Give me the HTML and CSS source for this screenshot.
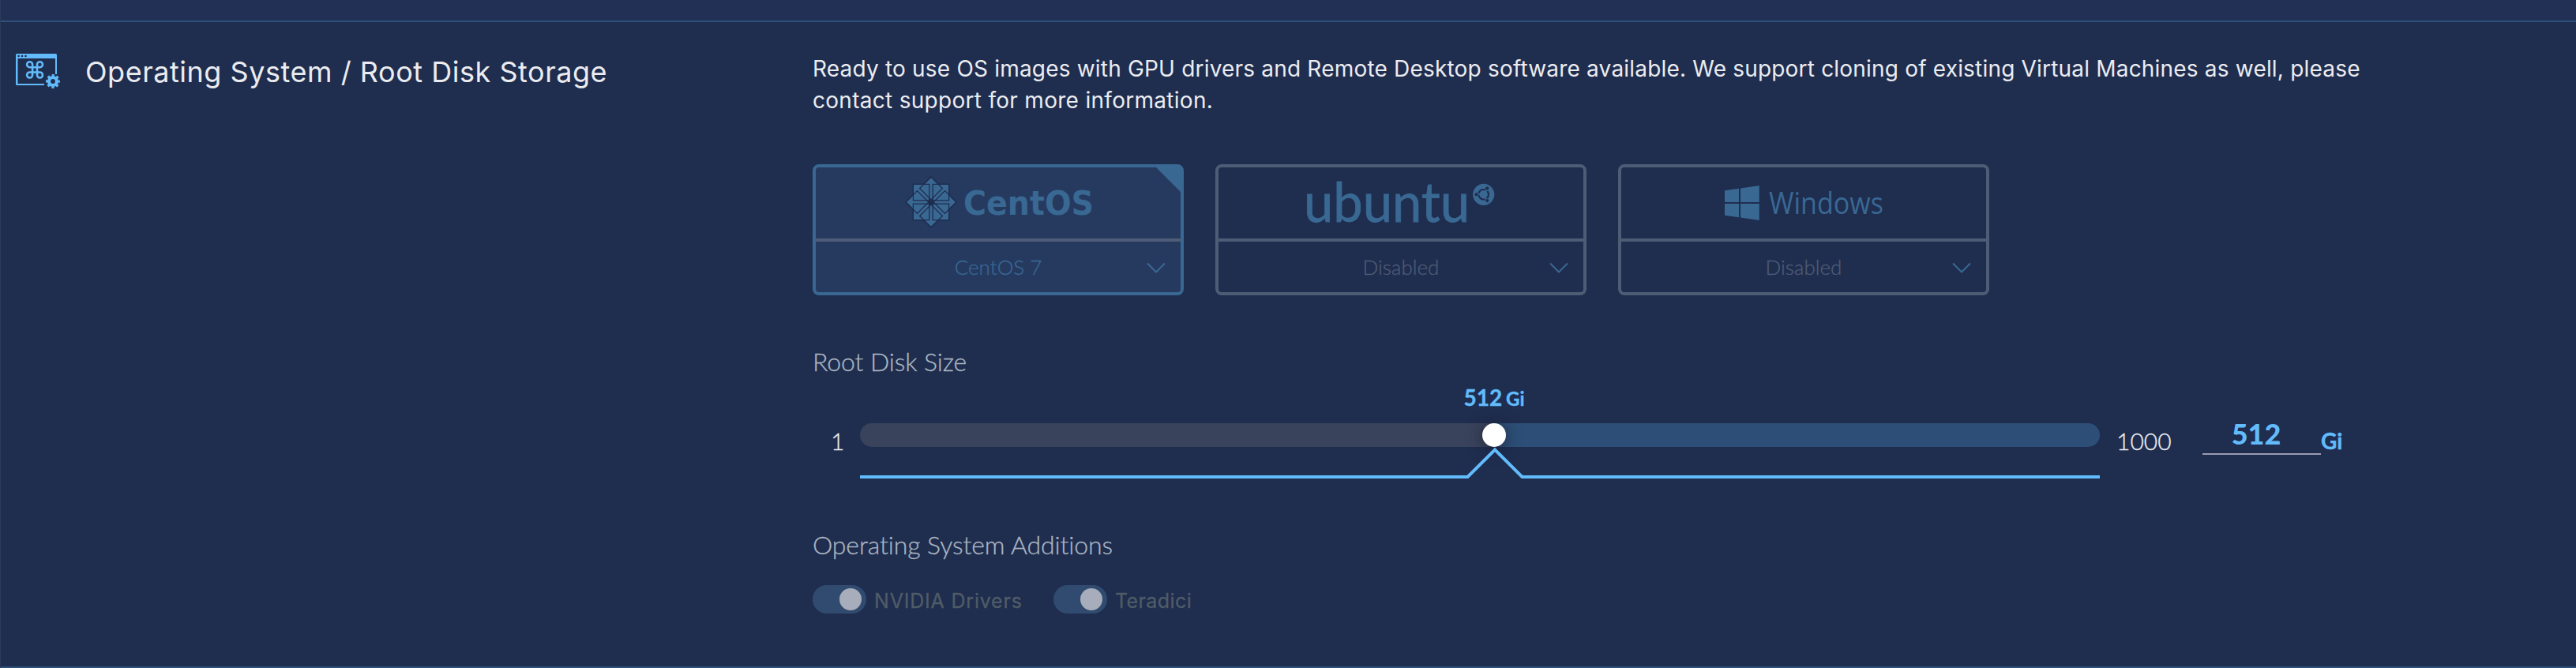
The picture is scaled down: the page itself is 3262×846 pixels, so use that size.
FILE: index.html
```html
<!DOCTYPE html>
<html lang="en">
<head>
<meta charset="utf-8">
<title>Operating System / Root Disk Storage</title>
<link rel="stylesheet" href="styles.css">
</head>
<body>
<div class="page">
  <div class="strip"></div>
  <section class="section">
    <header class="section-head">
      <svg class="head-icon" viewBox="0 0 56 44">
        <path d="M1.5 0H50.5Q52 0 52 1.5V26H50V6H2.500V38H36V40H1.500Q0 40 0 38.500V1.500Q0 0 1.500 0Z" fill="#62bbfb"/>
        <g fill="#1f2d4f"><circle cx="3.600" cy="3" r="1.300"/><circle cx="8" cy="3" r="1.300"/><circle cx="12.500" cy="3" r="1.300"/></g>
        <path d="M21.300 17.700V14.500A3.500 3.500 0 1 0 17.800 17.700H30.700A3.500 3.500 0 1 0 27.200 14.500V27.500A3.500 3.500 0 1 0 30.700 24H17.800A3.500 3.500 0 1 0 21.300 27.500Z" transform="translate(-.2 -.5)" fill="none" stroke="#62bbfb" stroke-width="2.600"/>
        <g fill="none" stroke="#62bbfb"><circle cx="47" cy="35" r="5" stroke-width="4.200"/><circle cx="47" cy="35" r="7.700" stroke-width="2.600" stroke-dasharray="3.200 2.847" stroke-dashoffset="1.600"/></g>
      </svg>
      <h2 class="title">Operating System / Root Disk Storage</h2>
    </header>
    <div class="content">
      <p class="desc"><span class="line1">Ready to use OS images with GPU drivers and Remote Desktop software available. We support cloning of existing Virtual Machines as well, please</span><br><span class="line2">contact support for more information.</span></p>

      <div class="cards">
        <div class="card selected">
          <svg class="corner" viewBox="0 0 31 31"><path d="M0 0H31V31Z" fill="#396893"/></svg>
          <svg class="logo" viewBox="0 0 462 90">
            <g transform="translate(146 44)" stroke="#1f2d4f" stroke-width="1.300" fill="#396893">
              <rect x="-22.600" y="-22.600" width="45.200" height="45.200"/>
              <rect x="-22.600" y="-22.600" width="45.200" height="45.200" transform="rotate(45)"/>
              <rect x="-22" y="-22" width="44" height="44" stroke="none"/>
              <g id="quads" fill="none">
                <path d="M-22.600-22.600H-2.200V-2.200H-22.600ZM22.600-22.600H2.200V-2.200H22.600ZM-22.600 22.600H-2.200V2.200H-22.600ZM22.600 22.600H2.200V2.200H22.600Z"/>
              </g>
              <use href="#quads" transform="rotate(45)"/>
              <circle r="4" fill="#1f2d4f" stroke="none"/>
            </g>
            <text class="centos" x="187" y="60" textLength="165" lengthAdjust="spacingAndGlyphs">CentOS</text>
          </svg>
          <div class="choice"><span class="choice-text">CentOS 7</span><svg class="chev" viewBox="0 0 24 14"><path d="M1 1.500L12 12.500 23 1.500"/></svg></div>
        </div>
        <div class="card">
          <svg class="logo" viewBox="0 0 462 90">
            <text class="ubuntu" x="108" y="69" textLength="210" lengthAdjust="spacingAndGlyphs">ubuntu</text>
            <circle cx="335.700" cy="34.300" r="13.600" fill="#396893"/>
            <g transform="translate(335.700 34.300)" fill="none" stroke="#1f2d4f">
              <circle r="6.300" stroke-width="2.200" stroke-dasharray="11.195 2" stroke-dashoffset="-7.600"/>
              <g fill="#1f2d4f" stroke="#396893" stroke-width=".8"><circle cx="-9" r="2.500"/><circle cx="4.500" cy="-7.800" r="2.500"/><circle cx="4.500" cy="7.800" r="2.500"/></g>
            </g>
          </svg>
          <div class="choice"><span class="choice-text">Disabled</span><svg class="chev" viewBox="0 0 24 14"><path d="M1 1.500L12 12.500 23 1.500"/></svg></div>
        </div>
        <div class="card">
          <svg class="logo" viewBox="0 0 462 90">
            <path d="M131 29.300L149 26.800V44H131ZM151 26.500L174.700 23V44H151ZM131 46H149V63.300L131 60.800ZM151 46H174.700V67L151 63.600Z" fill="#396893"/>
            <text class="windows" x="187" y="58.500" textLength="145" lengthAdjust="spacingAndGlyphs">Windows</text>
          </svg>
          <div class="choice"><span class="choice-text">Disabled</span><svg class="chev" viewBox="0 0 24 14"><path d="M1 1.500L12 12.500 23 1.500"/></svg></div>
        </div>
      </div>

      <h3 class="label">Root Disk Size</h3>
      <div class="slider-row">
        <span class="bound min">1</span>
        <div class="slider">
          <div class="value">512 <small>Gi</small></div>
          <div class="track"><div class="passed"></div><div class="thumb"></div><div class="rest"></div></div>
          <svg class="bracket" viewBox="0 0 1570 44"><path d="M0 38H769.500L804 3.500 838.500 38H1570" fill="none" stroke="#62bbfb" stroke-width="4"/></svg>
        </div>
        <span class="bound max">1000</span>
        <div class="field">512</div>
        <span class="unit">Gi</span>
      </div>

      <h3 class="label additions">Operating System Additions</h3>
      <div class="toggles">
        <div class="toggle"><span class="switch"><i class="knob"></i></span><span class="toggle-text nvidia">NVIDIA Drivers</span></div>
        <div class="toggle"><span class="switch"><i class="knob"></i></span><span class="toggle-text teradici">Teradici</span></div>
      </div>
    </div>
  </section>
</div>
</body>
</html>
```
FILE: styles.css
```css
* { box-sizing: border-box; }
body { margin: 0; background: #1f2d4f; font-family: Lato, sans-serif; font-variant-ligatures: none; }
h2, h3, p { margin: 0; font-weight: 400; }
svg { display: block; flex: none; }
.page { height: 846px; display: flex; flex-direction: column; border-left: 1px solid #2c3a5c; overflow: hidden; }
.strip { height: 28px; flex: none; background: #233056; border-bottom: 2px solid #2d517b; }
.section { flex: 1; display: grid; grid-template-columns: 1028px 1fr; border-bottom: 2px solid #2d517b; }
.section-head { display: flex; align-items: flex-start; padding: 40px 0 0 19px; }
.head-icon { width: 56px; height: 44px; margin-right: 32px; }
.title { font: 400 36px/44px Inter, sans-serif; letter-spacing: .530px; color: #ebecef; white-space: nowrap; margin-top: 1px; }
.content { padding-top: 39px; }
.desc { font: 400 28px/40px Inter, sans-serif; letter-spacing: .190px; color: #ebecef; white-space: nowrap; }
.line2 { letter-spacing: .290px; }
.cards { display: flex; gap: 40px; margin-top: 61px; }
.card { position: relative; width: 470px; height: 166px; border: 4px solid #4e5c75; border-radius: 8px; background: #1f2d4f; color: #4e5c75; }
.selected { border-color: #396893; background: #263a60; color: #396893; }
.corner { position: absolute; top: 0; right: 0; width: 31px; height: 31px; }
.logo { width: 462px; height: 90px; }
.logo text { fill: #396893; }
.centos { font: 700 43px "DejaVu Sans", sans-serif; }
.ubuntu { font: 400 69px Lato, sans-serif; stroke: #396893; stroke-width: .8px; }
.windows { font: 400 38px "Open Sans", sans-serif; }
.choice { display: flex; align-items: center; height: 68px; border-top: 4px solid #4e5c75; padding: 0 19px 0 43px; }
.choice-text { flex: 1; text-align: center; font-size: 26px; font-weight: 300; line-height: 32px; -webkit-text-stroke: .3px currentColor; }
.chev { width: 24px; height: 14px; margin-top: 2px; fill: none; stroke: #396893; stroke-width: 2; }
.label { font-size: 32px; font-weight: 300; line-height: 40px; letter-spacing: -.120px; color: #abb7c3; margin-top: 64px; -webkit-text-stroke: .3px currentColor; }
.slider-row { display: flex; align-items: flex-start; padding-top: 8px; }
.bound { font-size: 30px; font-weight: 300; line-height: 36px; color: #ebecef; margin-top: 54px; -webkit-text-stroke: .3px currentColor; }
.min { width: 60px; padding-left: 23px; }
.slider { width: 1570px; }
.value { width: 120px; height: 34px; margin-left: 743px; text-align: center; font-size: 28px; font-weight: 700; line-height: 34px; color: #62bbfb; white-space: nowrap; -webkit-text-stroke: .4px currentColor; }
.value small { font-size: 24px; line-height: 24px; margin-left: -2px; }
.track { display: flex; height: 30px; margin-top: 16px; border-radius: 15px; background: linear-gradient(90deg, #3a435c 803px, #2d4f77 803px); }
.passed { width: 788px; }
.thumb { width: 30px; height: 30px; border-radius: 50%; background: #fff; box-shadow: 0 2px 20px rgba(20, 25, 40, .7); }
.rest { flex: 1; }
.bracket { position: relative; width: 1570px; height: 44px; }
.max { width: 130px; padding-left: 21px; }
.field { width: 150px; height: 49px; margin-top: 41px; padding-right: 14px; border-bottom: 2px solid #9a9db0; text-align: center; font-size: 36px; font-weight: 900; line-height: 44px; color: #62bbfb; }
.unit { margin-top: 54px; font-size: 28px; font-weight: 700; line-height: 36px; color: #62bbfb; -webkit-text-stroke: .4px currentColor; }
.additions { margin-top: 60px; }
.toggles { display: flex; margin-top: 31px; }
.toggle { display: flex; width: 305px; }
.switch { width: 68px; height: 36px; padding: 4px 6px; border-radius: 18px; background: #314b70; display: flex; justify-content: flex-end; }
.knob { width: 28px; height: 28px; border-radius: 50%; background: #a7adba; }
.toggle-text { font: 400 25px/36px Inter, sans-serif; color: #4f5c66; margin: 2px 0 0 10px; white-space: nowrap; -webkit-text-stroke: .3px currentColor; }
.nvidia { letter-spacing: .800px; }
.teradici { letter-spacing: .400px; }
```
